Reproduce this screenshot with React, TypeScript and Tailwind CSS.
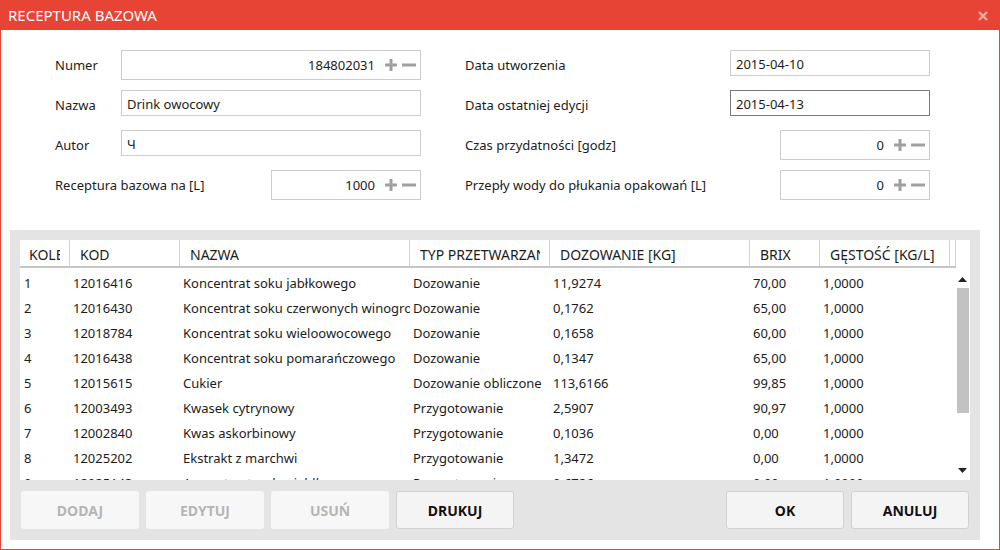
import React from 'react';

const font = { fontFamily: '"Noto Sans", "Open Sans", sans-serif' };

const PlusMinus = () => (
    <div className="flex items-center ml-[10px] mr-[4px]">
        <svg width="12" height="12" viewBox="0 0 12 12">
            <path d="M0 6H12M6 0V12" stroke="#a0a0a0" strokeWidth="3" />
        </svg>
        <svg width="14" height="12" viewBox="0 0 14 12" className="ml-[5px]">
            <path d="M0 6H14" stroke="#a0a0a0" strokeWidth="3" />
        </svg>
    </div>
);

const NumberBox = ({ value, width }: { value: string; width: string }) => (
    <div className={`${width} h-[30px] border border-[#cccccc] bg-white flex items-center justify-end`}>
        <span className="pt-[2px]">{value}</span>
        <PlusMinus />
    </div>
);

const TextBox = ({ value, width, focused }: { value: string; width: string; focused?: boolean }) => (
    <div className={`${width} h-[26px] self-start border ${focused ? 'border-[#7a7a7a]' : 'border-[#cccccc]'} bg-white flex items-center pl-[5px] pt-[3px]`}>
        {value}
    </div>
);

const Label = ({ children }: { children: React.ReactNode }) => <span className="pt-[2px]">{children}</span>;

const columns = [
    { label: 'KOLEJNOŚĆ', w: 'w-[50px]' },
    { label: 'KOD', w: 'w-[110px]' },
    { label: 'NAZWA', w: 'w-[230px]' },
    { label: 'TYP PRZETWARZANIA', w: 'w-[140px]' },
    { label: 'DOZOWANIE [KG]', w: 'w-[200px]' },
    { label: 'BRIX', w: 'w-[70px]' },
    { label: 'GĘSTOŚĆ [KG/L]', w: 'w-[130px]' },
];

const rows = [
    ['1', '12016416', 'Koncentrat soku jabłkowego', 'Dozowanie', '11,9274', '70,00', '1,0000'],
    ['2', '12016430', 'Koncentrat soku czerwonych winogron', 'Dozowanie', '0,1762', '65,00', '1,0000'],
    ['3', '12018784', 'Koncentrat soku wieloowocowego', 'Dozowanie', '0,1658', '60,00', '1,0000'],
    ['4', '12016438', 'Koncentrat soku pomarańczowego', 'Dozowanie', '0,1347', '65,00', '1,0000'],
    ['5', '12015615', 'Cukier', 'Dozowanie obliczone', '113,6166', '99,85', '1,0000'],
    ['6', '12003493', 'Kwasek cytrynowy', 'Przygotowanie', '2,5907', '90,97', '1,0000'],
    ['7', '12002840', 'Kwas askorbinowy', 'Przygotowanie', '0,1036', '0,00', '1,0000'],
    ['8', '12025202', 'Ekstrakt z marchwi', 'Przygotowanie', '1,3472', '0,00', '1,0000'],
    ['9', '12025143', 'Aromat naturalny jabłkowy', 'Przygotowanie', '0,6726', '0,00', '1,0000'],
];

const Button = ({ label, disabled }: { label: string; disabled?: boolean }) => (
    <button
        className={`w-[118px] h-[38px] rounded-[3px] font-bold text-[14px] ${
            disabled
                ? 'bg-[#f7f7f7] text-[#b5b5b5]'
                : 'bg-[#f4f4f4] border border-[#d2d2d2] text-[#111]'
        }`}
    >
        {label}
    </button>
);

export default function App() {
    return (
        <div className="w-[1000px] h-[550px] bg-white border border-[#e84435] flex flex-col text-[13px] text-[#1c1c1c]" style={font}>
            {/* Title bar */}
            <div className="h-[29px] bg-[#e84435] flex items-center justify-between pl-[7px] pr-[11px] shrink-0">
                <span className="text-white text-[15px]">RECEPTURA BAZOWA</span>
                <svg width="10" height="10" viewBox="0 0 10 10">
                    <path d="M1 1L9 9M9 1L1 9" stroke="#f6aaa4" strokeWidth="2.4" />
                </svg>
            </div>

            {/* Form */}
            <div className="flex pt-[20px] pl-[54px]">
                <div className="w-[366px] flex flex-col gap-[10px]">
                    <div className="h-[30px] flex items-center justify-between">
                        <Label>Numer</Label>
                        <NumberBox value="184802031" width="w-[300px]" />
                    </div>
                    <div className="h-[30px] flex items-center justify-between">
                        <Label>Nazwa</Label>
                        <TextBox value="Drink owocowy" width="w-[300px]" />
                    </div>
                    <div className="h-[30px] flex items-center justify-between">
                        <Label>Autor</Label>
                        <TextBox value="Ч" width="w-[300px]" />
                    </div>
                    <div className="h-[30px] flex items-center justify-between">
                        <Label>Receptura bazowa na [L]</Label>
                        <NumberBox value="1000" width="w-[150px]" />
                    </div>
                </div>
                <div className="w-[465px] ml-[44px] flex flex-col gap-[10px]">
                    <div className="h-[30px] flex items-center justify-between">
                        <Label>Data utworzenia</Label>
                        <TextBox value="2015-04-10" width="w-[200px]" />
                    </div>
                    <div className="h-[30px] flex items-center justify-between">
                        <Label>Data ostatniej edycji</Label>
                        <TextBox value="2015-04-13" width="w-[200px]" focused />
                    </div>
                    <div className="h-[30px] flex items-center justify-between">
                        <Label>Czas przydatności [godz]</Label>
                        <NumberBox value="0" width="w-[150px]" />
                    </div>
                    <div className="h-[30px] flex items-center justify-between">
                        <Label>Przepły wody do płukania opakowań [L]</Label>
                        <NumberBox value="0" width="w-[150px]" />
                    </div>
                </div>
            </div>

            {/* Grid panel */}
            <div className="mt-[30px] ml-[9px] w-[970px] h-[310px] bg-[#e4e4e4] pt-[10px] pl-[10px] flex flex-col">
                <div className="w-[950px] h-[240px] bg-white flex flex-col overflow-hidden">
                    {/* Header */}
                    <div className="h-[28px] flex shrink-0">
                        <div className="flex border-b-2 border-[#c6c6c6]">
                            {columns.map((c, i) => (
                                <div
                                    key={c.label}
                                    className={`${c.w} h-[26px] flex items-center border-r border-[#d4d4d4] pt-[2px] pr-[9px] text-[14px] ${i === 0 ? 'pl-[9px]' : 'pl-[10px]'}`}
                                >
                                    <div className="overflow-hidden whitespace-nowrap">{c.label}</div>
                                </div>
                            ))}
                            <div className="w-[6px] h-[26px] border-r border-[#d4d4d4]" />
                        </div>
                    </div>
                    {/* Body */}
                    <div className="flex flex-1 overflow-hidden">
                        <div className="w-[936px] pt-[3px] flex flex-col">
                            {rows.map(r => (
                                <div key={r[0]} className="h-[25px] flex items-center shrink-0">
                                    {r.map((cell, i) => (
                                        <div key={i} className={`${columns[i].w} ${i === 0 ? 'pl-[4px]' : 'pl-[3px]'} overflow-hidden whitespace-nowrap`}>
                                            {cell}
                                        </div>
                                    ))}
                                </div>
                            ))}
                        </div>
                        {/* Scrollbar */}
                        <div className="w-[14px] flex flex-col items-center pt-[9px] pb-[6px] pr-[1px]">
                            <svg width="9" height="6" viewBox="0 0 9 6">
                                <path d="M0 5L4.5 0L9 5Z" fill="#222" />
                            </svg>
                            <div className="w-[12px] h-[125px] bg-[#c2c2c2] mt-[5px]" />
                            <div className="flex-1" />
                            <svg width="9" height="6" viewBox="0 0 9 6">
                                <path d="M0 0L9 0L4.5 5Z" fill="#222" />
                            </svg>
                        </div>
                    </div>
                </div>

                {/* Buttons */}
                <div className="flex mt-[11px] pl-[1px] pr-[11px]">
                    <div className="flex gap-[7px]">
                        <Button label="DODAJ" disabled />
                        <Button label="EDYTUJ" disabled />
                        <Button label="USUŃ" disabled />
                        <Button label="DRUKUJ" />
                    </div>
                    <div className="flex gap-[7px] ml-auto">
                        <Button label="OK" />
                        <Button label="ANULUJ" />
                    </div>
                </div>
            </div>
        </div>
    );
}
